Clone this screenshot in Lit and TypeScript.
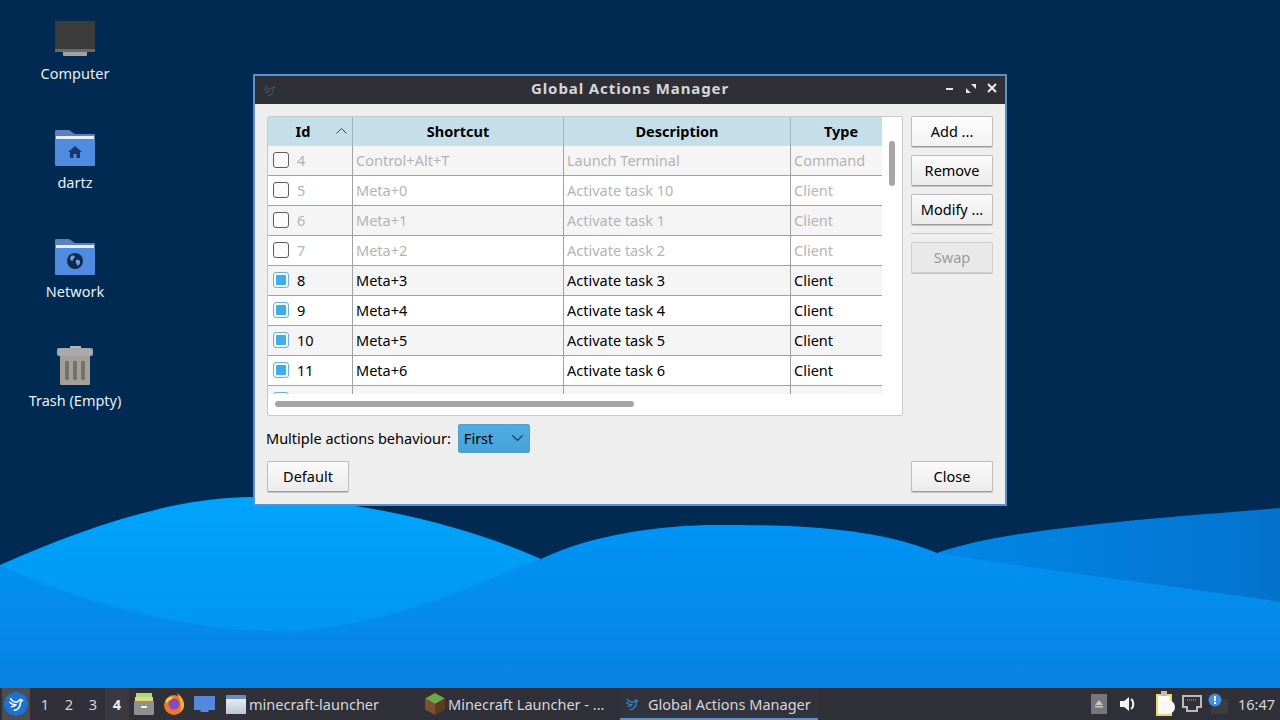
import { LitElement, css, html, svg } from "lit";
import { customElement } from "lit/decorators.js";
import { classMap } from "lit/directives/class-map.js";

const ROWS = [
  { id: "4", key: "Control+Alt+T", desc: "Launch Terminal", type: "Command", on: false },
  { id: "5", key: "Meta+0", desc: "Activate task 10", type: "Client", on: false },
  { id: "6", key: "Meta+1", desc: "Activate task 1", type: "Client", on: false },
  { id: "7", key: "Meta+2", desc: "Activate task 2", type: "Client", on: false },
  { id: "8", key: "Meta+3", desc: "Activate task 3", type: "Client", on: true },
  { id: "9", key: "Meta+4", desc: "Activate task 4", type: "Client", on: true },
  { id: "10", key: "Meta+5", desc: "Activate task 5", type: "Client", on: true },
  { id: "11", key: "Meta+6", desc: "Activate task 6", type: "Client", on: true },
  { id: "", key: "", desc: "", type: "", on: true },
];

const wallpaper = svg`
  <defs>
    <linearGradient id="lite" x1="0" y1="0" x2="0" y2="1">
      <stop offset="0" stop-color="#00a4fb" /><stop offset="1" stop-color="#0096f2" />
    </linearGradient>
    <linearGradient id="main" x1="0" y1="0" x2="0" y2="1">
      <stop offset="0" stop-color="#0094f4" /><stop offset="1" stop-color="#0a7fe2" />
    </linearGradient>
    <linearGradient id="back" x1="0" y1="0" x2="1" y2="0">
      <stop offset="0" stop-color="#0088e8" /><stop offset="1" stop-color="#0472cc" />
    </linearGradient>
  </defs>
  <path fill="url(#back)" d="M937 553C1000 530 1130 520 1280 508V640H937Z" />
  <path fill="url(#main)" d="M0 565V720H1280V602C1170 585 1050 572 937 553C870 525 780 525 718 525C660 525 590 535 541 559Z" />
  <path fill="url(#lite)" d="M0 565C80 530 170 497 253 497C310 497 430 510 541 559C470 585 380 631 278 631C170 631 50 590 0 565Z" />
`;

const logo = (size: number, color = "#fff") => html`
  <svg width=${size} height=${size} viewBox="0 0 20 20" fill="none" stroke=${color} stroke-width="1.7" stroke-linecap="round">
    <path d="M4 4c2 3 4 4 7 4l4-3 2 1-2 2c0 5-3 9-7 9" />
    <path d="M3 8c2 2 4 3 7 3M5 13c2 0 4-.5 5-2" />
  </svg>
`;

const folder = (badge: unknown) => html`
  <svg width="42" height="38" viewBox="0 0 42 38">
    <path fill="#5a80bd" d="M1 2a1 1 0 0 1 1-1h13l6 4h19a1 1 0 0 1 1 1v10H1Z" />
    <rect x="2" y="7" width="38" height="4" fill="#e8eef8" />
    <path fill="#4f8bdf" d="M1 10h40v26a1 1 0 0 1-1 1H2a1 1 0 0 1-1-1Z" />
    ${badge}
  </svg>
`;

const homeBadge = svg`<path fill="#143a6b" d="M21 17l7 6h-2v6h-3.500v-4h-3v4H16v-6h-2z" />`;
const netBadge = svg`
  <circle cx="21" cy="23" r="8" fill="#10294d" />
  <path fill="#6f9fdc" d="M17 18c2-1 4 0 4 1s-2 1-2 3-3 0-3-1zM22 22c2-1 5 0 4 3s-3 3-3 2-2-3-1-5z" />
`;

@customElement("app-root")
export class AppRoot extends LitElement {
  static override styles = css`
    :host {
      display: block;
      position: relative;
      width: 1280px;
      height: 720px;
      overflow: hidden;
      background: #002a52;
      font-family: "Noto Sans", "Liberation Sans", sans-serif;
      font-size: 14.5px;
      color: #000;
    }
    .wallpaper {
      position: absolute;
      inset: 0;
    }
    .icons {
      position: relative;
      width: 150px;
      padding-top: 17px;
      display: flex;
      flex-direction: column;
      align-items: center;
      gap: 17px;
    }
    .desk-icon {
      height: 92px;
      display: flex;
      flex-direction: column;
      align-items: center;
      color: #e8eef4;
    }
    .desk-art {
      height: 44px;
      display: flex;
      align-items: center;
      justify-content: center;
    }
    .desk-label {
      margin-top: 2px;
      line-height: 20px;
      white-space: nowrap;
    }

    .window {
      position: absolute;
      left: 253px;
      top: 74px;
      width: 750px;
      height: 428px;
      border: 2px solid #5b90cc;
      background: #eeeeee;
      display: flex;
      flex-direction: column;
    }
    .titlebar {
      height: 28px;
      flex: none;
      box-sizing: border-box;
      padding-bottom: 4px;
      background: #2f2f38;
      display: flex;
      align-items: center;
      position: relative;
      justify-content: center;
      color: #d6d6d8;
      font-weight: 700;
      letter-spacing: 0.9px;
      font-size: 15px;
    }
    .title-icon {
      position: absolute;
      left: 7px;
      top: 6px;
      opacity: 0.6;
    }
    .wm {
      position: absolute;
      right: 6px;
      top: 5px;
      display: flex;
      gap: 7px;
    }
    .content {
      flex: 1;
      padding: 12px 12px 0;
      display: flex;
      flex-direction: column;
    }
    .top {
      display: flex;
      gap: 8px;
      height: 300px;
    }
    .frame {
      width: 634px;
      height: 298px;
      border: 1px solid #c8c8c8;
      border-radius: 2px;
      background: #fff;
      position: relative;
      overflow: hidden;
    }
    .table {
      width: 614px;
      height: 277px;
      overflow: hidden;
    }
    .row {
      display: grid;
      grid-template-columns: 85px 211px 227px 100px;
      width: 623px;
      height: 30px;
      box-sizing: border-box;
      border-bottom: 1px solid #a2a2a2;
      background: #fff;
      color: #000;
    }
    .row.alt {
      background: #f5f5f5;
    }
    .row.off {
      color: #b4b4b4;
    }
    .head {
      height: 29px;
      background: #c5dfea;
      border-bottom: none;
      font-weight: 700;
    }
    .cell {
      display: flex;
      align-items: center;
      padding: 0 0 2px 3px;
      border-right: 1px solid #a2a2a2;
      white-space: nowrap;
      box-sizing: border-box;
    }
    .cell:last-child {
      border-right: none;
    }
    .head .cell {
      justify-content: center;
      padding-left: 0;
      border-right-color: #9fb4be;
      position: relative;
    }
    .head .cell.id-head {
      padding-right: 14px;
    }
    .sort {
      position: absolute;
      right: 4px;
      top: 10px;
    }
    .id-cell {
      padding-left: 5px;
      gap: 8px;
    }
    .check {
      width: 16px;
      height: 16px;
      box-sizing: border-box;
      border: 1px solid #5c5c5c;
      border-radius: 3px;
      background: #fcfcfc;
      flex: none;
    }
    .check.on {
      border-color: #6ab3d8;
      padding: 2px;
      background: #f4f8fb;
    }
    .check.on::before {
      content: "";
      display: block;
      width: 10px;
      height: 10px;
      background: #3daee9;
      border-radius: 1px;
    }
    .vthumb {
      position: absolute;
      left: 621px;
      top: 24px;
      width: 6px;
      height: 45px;
      border-radius: 3px;
      background: #a6a6a6;
    }
    .hbar {
      padding: 7px 0 0 7px;
    }
    .hthumb {
      width: 359px;
      height: 6px;
      border-radius: 3px;
      background: #a6a6a6;
    }
    .side {
      width: 82px;
      display: flex;
      flex-direction: column;
      gap: 8px;
    }
    .btn {
      width: 82px;
      height: 31px;
      box-sizing: border-box;
      padding-bottom: 2px;
      display: flex;
      align-items: center;
      justify-content: center;
      border: 1px solid #bcbcbc;
      border-bottom-color: #9c9c9c;
      border-radius: 2px;
      background: linear-gradient(#fafafa, #ebebeb);
      box-shadow: 0 1px 0 #c4c4c4;
    }
    .btn.light {
      background: linear-gradient(#fdfdfd, #f2f2f2);
    }
    .btn.disabled {
      color: #9a9a9a;
      background: #e9e9e9;
      border-color: #cfcfcf;
    }
    .sep {
      height: 1px;
      background: #c9c9c9;
      margin-bottom: 0;
    }
    .behaviour {
      display: flex;
      align-items: center;
      gap: 7px;
      height: 29px;
      margin-top: 8px;
      margin-left: -1px;
      padding-bottom: 2px;
      box-sizing: border-box;
    }
    .combo {
      width: 72px;
      height: 29px;
      flex: none;
      margin-bottom: -2px;
      padding: 0 5px 2px;
      box-sizing: border-box;
      border: 1px solid #5c9ec8;
      border-radius: 2px;
      background: linear-gradient(#4dade2, #48a2d8);
      display: flex;
      align-items: center;
      justify-content: space-between;
    }
    .bottom {
      display: flex;
      justify-content: space-between;
      margin-top: 8px;
    }

    .taskbar {
      position: absolute;
      left: 0;
      right: 0;
      bottom: 0;
      height: 32px;
      background: #2f3038;
      color: #d6d6d8;
      display: flex;
      align-items: center;
    }
    .menu {
      width: 28px;
      height: 32px;
      margin-left: 2px;
      background: #4b4c54;
      display: flex;
      align-items: center;
      justify-content: center;
    }
    .menu span {
      width: 24px;
      height: 24px;
      border-radius: 50%;
      background: #1c74d0;
      display: flex;
      align-items: center;
      justify-content: center;
    }
    .desks {
      display: flex;
      margin-left: 3px;
      height: 32px;
    }
    .desk {
      width: 24px;
      display: flex;
      align-items: center;
      justify-content: center;
    }
    .desk.now {
      background: #383941;
      font-weight: 700;
      color: #eee;
    }
    .launch {
      display: flex;
      align-items: center;
      margin-left: 2px;
      width: 92px;
      gap: 9px;
      padding-left: 3px;
      box-sizing: border-box;
    }
    .tasks {
      display: flex;
      gap: 1px;
      margin-left: -1px;
    }
    .task {
      width: 198px;
      height: 32px;
      box-sizing: border-box;
      display: flex;
      align-items: center;
      gap: 3px;
      padding-left: 4px;
      white-space: nowrap;
      overflow: hidden;
    }
    .task.active {
      background: #32323c;
      border-bottom: 2px solid #5e90d4;
      padding-top: 1px;
      gap: 8px;
    }
    .tray {
      margin-left: auto;
      display: flex;
      align-items: center;
      padding-right: 5px;
    }
    .tray svg {
      display: block;
    }
    .tray .gap-12 {
      margin-left: 12px;
    }
    .tray .gap-18 {
      margin-left: 18px;
    }
    .tray .gap-7 {
      margin-left: 7px;
    }
    .tray .gap-6 {
      margin-left: 6px;
    }
    .clock {
      margin-left: 10px;
    }
  `;

  private renderRow(r: (typeof ROWS)[number], i: number) {
    return html`
      <div class=${classMap({ row: true, alt: i % 2 === 0, off: !r.on })}>
        <div class="cell id-cell"><span class=${classMap({ check: true, on: r.on })}></span>${r.id}</div>
        <div class="cell">${r.key}</div>
        <div class="cell">${r.desc}</div>
        <div class="cell">${r.type}</div>
      </div>
    `;
  }

  private renderDesktop() {
    return html`
      <div class="icons">
        <div class="desk-icon">
          <div class="desk-art">
            <svg width="42" height="38" viewBox="0 0 42 38">
              <rect x="1" y="1" width="40" height="28" fill="#3b3b3b" />
              <rect x="1" y="29" width="40" height="3" fill="#6a6a6a" />
              <path fill="#a2a2a2" d="M9 32h24v3a1 1 0 0 1-1 1H10a1 1 0 0 1-1-1Z" />
            </svg>
          </div>
          <div class="desk-label">Computer</div>
        </div>
        <div class="desk-icon">
          <div class="desk-art">${folder(homeBadge)}</div>
          <div class="desk-label">dartz</div>
        </div>
        <div class="desk-icon">
          <div class="desk-art">${folder(netBadge)}</div>
          <div class="desk-label">Network</div>
        </div>
        <div class="desk-icon">
          <div class="desk-art">
            <svg width="38" height="40" viewBox="0 0 38 40">
              <rect x="14" y="0" width="11" height="3" fill="#b6b6b6" />
              <rect x="1" y="2" width="36" height="8" rx="2" fill="#a9a9ab" />
              <path fill="#a39f99" d="M4 10h30v28a1 1 0 0 1-1 1H5a1 1 0 0 1-1-1Z" />
              <rect x="9" y="15" width="4" height="19" rx="1" fill="#74716c" />
              <rect x="17" y="15" width="4" height="19" rx="1" fill="#74716c" />
              <rect x="25" y="15" width="4" height="19" rx="1" fill="#74716c" />
            </svg>
          </div>
          <div class="desk-label">Trash (Empty)</div>
        </div>
      </div>
    `;
  }

  private renderWindow() {
    return html`
      <div class="window">
        <div class="titlebar">
          <span class="title-icon">${logo(15, "#3a6a80")}</span>
          Global Actions Manager
          <div class="wm">
            <svg width="14" height="14" viewBox="0 0 14 14"><rect x="3" y="7" width="7" height="2" fill="#e6e6e6" /></svg>
            <svg width="14" height="14" viewBox="0 0 14 14" fill="#e6e6e6"><path d="M7 3h5v5zM7 12H2V7z" /></svg>
            <svg width="14" height="14" viewBox="0 0 14 14" stroke="#eee" stroke-width="2"><path d="M3 3l8 8M11 3l-8 8" /></svg>
          </div>
        </div>
        <div class="content">
          <div class="top">
            <div class="frame">
              <div class="table">
                <div class="row head">
                  <div class="cell id-head">
                    Id
                    <svg class="sort" width="13" height="8" viewBox="0 0 13 8" fill="none" stroke="#33474f" stroke-width="1"><path d="M1.500 6.500l5-5 5 5" /></svg>
                  </div>
                  <div class="cell">Shortcut</div>
                  <div class="cell">Description</div>
                  <div class="cell">Type</div>
                </div>
                ${ROWS.map((r, i) => this.renderRow(r, i))}
              </div>
              <div class="vthumb"></div>
              <div class="hbar"><div class="hthumb"></div></div>
            </div>
            <div class="side">
              <div class="btn light">Add ...</div>
              <div class="btn">Remove</div>
              <div class="btn">Modify ...</div>
              <div class="sep"></div>
              <div class="btn disabled">Swap</div>
            </div>
          </div>
          <div class="behaviour">
            Multiple actions behaviour:
            <div class="combo">
              First
              <svg width="13" height="8" viewBox="0 0 13 8" fill="none" stroke="#123a55" stroke-width="1.200"><path d="M1.500 1.500l5 5 5-5" /></svg>
            </div>
          </div>
          <div class="bottom">
            <div class="btn">Default</div>
            <div class="btn">Close</div>
          </div>
        </div>
      </div>
    `;
  }

  private renderTaskbar() {
    return html`
      <div class="taskbar">
        <div class="menu"><span>${logo(18)}</span></div>
        <div class="desks">
          <div class="desk">1</div>
          <div class="desk">2</div>
          <div class="desk">3</div>
          <div class="desk now">4</div>
        </div>
        <div class="launch">
          <svg width="20" height="22" viewBox="0 0 20 22">
            <rect x="2" y="0" width="16" height="4" fill="#a7d78a" />
            <rect x="1" y="4" width="18" height="4" fill="#e6d777" />
            <rect x="0" y="8" width="20" height="14" rx="1" fill="#8f8f8f" />
            <rect x="7" y="13" width="6" height="2" fill="#f0f0f0" />
          </svg>
          <svg width="22" height="22" viewBox="0 0 22 22">
            <circle cx="11" cy="12" r="10" fill="#f0762c" />
            <path fill="#ffb52c" d="M14 0c4 3 7 7 7 12 0 3-2 6-4 7 2-5 1-11-3-19z" />
            <circle cx="11" cy="11" r="5.500" fill="#7f4fc0" />
            <path fill="#ffcf45" d="M3 7c2-3 6-4 8-3-2 1-3 2-3 3-2 0-4 1-4 4-1-1-1-3-1-4z" />
          </svg>
          <svg width="21" height="18" viewBox="0 0 21 18">
            <path fill="#5588dc" d="M0 1h21v14H15l-1 2H7l-1-2H0z" />
          </svg>
        </div>
        <div class="tasks">
          <div class="task">
            <svg width="20" height="19" viewBox="0 0 20 19">
              <defs><linearGradient id="w" x1="0" y1="0" x2="0" y2="1"><stop offset="0" stop-color="#f4f6fa" /><stop offset="1" stop-color="#bcc6d6" /></linearGradient></defs>
              <rect width="20" height="19" fill="url(#w)" />
              <rect width="20" height="4" fill="#6a8cc4" />
            </svg>
            minecraft-launcher
          </div>
          <div class="task">
            <svg width="20" height="22" viewBox="0 0 20 22">
              <path fill="#6fa84a" d="M10 0l10 5.500-10 5.500L0 5.500z" />
              <path fill="#7a5230" d="M0 5.500l10 5.500v11L0 16.500z" />
              <path fill="#5c3d22" d="M20 5.500L10 11v11l10-5.500z" />
            </svg>
            Minecraft Launcher - ...
          </div>
          <div class="task active">
            ${logo(16, "#2d86c6")}
            Global Actions Manager
          </div>
        </div>
        <div class="tray">
          <svg width="16" height="20" viewBox="0 0 16 20"><rect width="16" height="20" fill="#77777b" /><path fill="#c8c8c8" d="M8 6l4 5H4zM4 12h8v1.500H4z" /></svg>
          <svg class="gap-12" width="18" height="18" viewBox="0 0 18 18" fill="#f2f2f2"><path d="M1 6h4l5-4v14l-5-4H1z" /><path d="M12 4c3 2 3 8 0 10" fill="none" stroke="#f2f2f2" stroke-width="2" /></svg>
          <svg class="gap-18" width="20" height="26" viewBox="0 0 20 26"><rect x="1" y="3" width="16" height="22" fill="#f3d66a" /><rect x="3" y="5" width="12" height="18" fill="#fbfbf4" /><circle cx="13" cy="16" r="7" fill="#f8f8f8" /><rect x="6" y="0" width="6" height="5" fill="#bdbdbd" /></svg>
          <svg class="gap-7" width="20" height="18" viewBox="0 0 20 18"><path fill="none" stroke="#b9b9b9" stroke-width="2" d="M1 1h18v11h-4v4H5v-4H1z" /><path stroke="#b9b9b9" stroke-dasharray="1 1" d="M5 5h10" /></svg>
          <svg class="gap-6" width="20" height="22" viewBox="0 0 20 22"><rect x="3" y="6" width="17" height="15" fill="#3a3c40" /><circle cx="7" cy="7" r="6.500" fill="#3f8fe6" /><rect x="6" y="3" width="2" height="5" fill="#fff" /><rect x="6" y="9" width="2" height="2" fill="#fff" /></svg>
          <span class="clock">16:47</span>
        </div>
      </div>
    `;
  }

  override render() {
    return html`
      <svg class="wallpaper" width="1280" height="720" viewBox="0 0 1280 720">${wallpaper}</svg>
      ${this.renderDesktop()} ${this.renderWindow()} ${this.renderTaskbar()}
    `;
  }
}

declare global {
  interface HTMLElementTagNameMap {
    "app-root": AppRoot;
  }
}
